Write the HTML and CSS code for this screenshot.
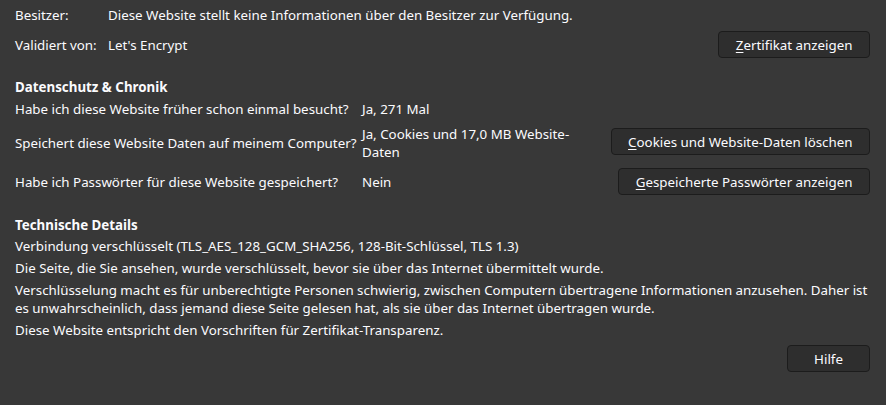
FILE: index.html
```html
<!DOCTYPE html>
<html lang="de">
<head>
    <meta charset="UTF-8">
    <title>Seiteninformationen</title>
    <link rel="stylesheet" href="styles.css">
</head>
<body>
    <div id="container">
        <div class="identity">
            <span class="label">Besitzer:</span>
            <span class="value wide">Diese Website stellt keine Informationen über den Besitzer zur Verfügung.</span>
            <span class="label">Validiert von:</span>
            <span class="value">Let's Encrypt</span>
            <button class="btn"><u>Z</u>ertifikat anzeigen</button>
        </div>

        <h3 class="heading privacy-heading">Datenschutz &amp; Chronik</h3>
        <div class="privacy">
            <span class="question">Habe ich diese Website früher schon einmal besucht?</span>
            <span class="answer">Ja, 271 Mal</span>
            <span></span>

            <span class="question">Speichert diese Website Daten auf meinem Computer?</span>
            <span class="answer">Ja, Cookies und 17,0 MB Website-Daten</span>
            <button class="btn top"><u>C</u>ookies und Website-Daten löschen</button>

            <span class="question">Habe ich Passwörter für diese Website gespeichert?</span>
            <span class="answer">Nein</span>
            <button class="btn"><u>G</u>espeicherte Passwörter anzeigen</button>
        </div>

        <h3 class="heading tech-heading">Technische Details</h3>
        <div class="tech">
            <p>Verbindung verschlüsselt (TLS_AES_128_GCM_SHA256, 128-Bit-Schlüssel, TLS 1.3)</p>
            <p>Die Seite, die Sie ansehen, wurde verschlüsselt, bevor sie über das Internet übermittelt wurde.</p>
            <p>Verschlüsselung macht es für unberechtigte Personen schwierig, zwischen Computern übertragene Informationen anzusehen. Daher ist es unwahrscheinlich, dass jemand diese Seite gelesen hat, als sie über das Internet übertragen wurde.</p>
            <p>Diese Website entspricht den Vorschriften für Zertifikat-Transparenz.</p>
        </div>

        <div class="footer">
            <button class="btn help">Hilfe</button>
        </div>
    </div>
</body>
</html>
```

FILE: styles.css
```css
*{
    margin: 0;
    padding: 0;
    box-sizing: border-box;
}
html,body{
    background: #383838;
}
body{
    color: #fbfbfe;
    font-family: "Noto Sans", "Open Sans", sans-serif;
    font-size: 13.333px;
    line-height: 18px;
}
#container{
    width: 886px;
    padding: 6px 16px 0 15px;
}
.identity{
    display: grid;
    grid-template-columns: 93px 1fr auto;
    row-gap: 7px;
    align-items: center;
}
.identity .wide{
    grid-column: 2 / 4;
}
.heading{
    font-size: 13.333px;
    font-weight: bold;
    line-height: 18px;
}
.privacy-heading{
    margin-top: 20px;
}
.privacy{
    display: grid;
    grid-template-columns: 347px 1fr auto;
    row-gap: 7px;
    align-items: center;
    margin-top: 4px;
}
.privacy .answer{
    max-width: 215px;
}
.privacy .top{
    align-self: start;
    margin-top: 3px;
}
.tech-heading{
    margin-top: 21px;
}
.tech{
    display: flex;
    flex-direction: column;
    gap: 4px;
    margin-top: 3px;
}
.footer{
    display: flex;
    justify-content: flex-end;
    margin-top: 6px;
}
.btn{
    height: 27px;
    padding: 0 16.5px;
    background: #2e2e2e;
    border: 1px solid #1c1c1c;
    border-radius: 4px;
    color: #fbfbfe;
    font-family: inherit;
    font-size: 13.333px;
    justify-self: end;
}
.btn u{
    text-underline-offset: 2px;
}
.help{
    min-width: 83px;
}
```
